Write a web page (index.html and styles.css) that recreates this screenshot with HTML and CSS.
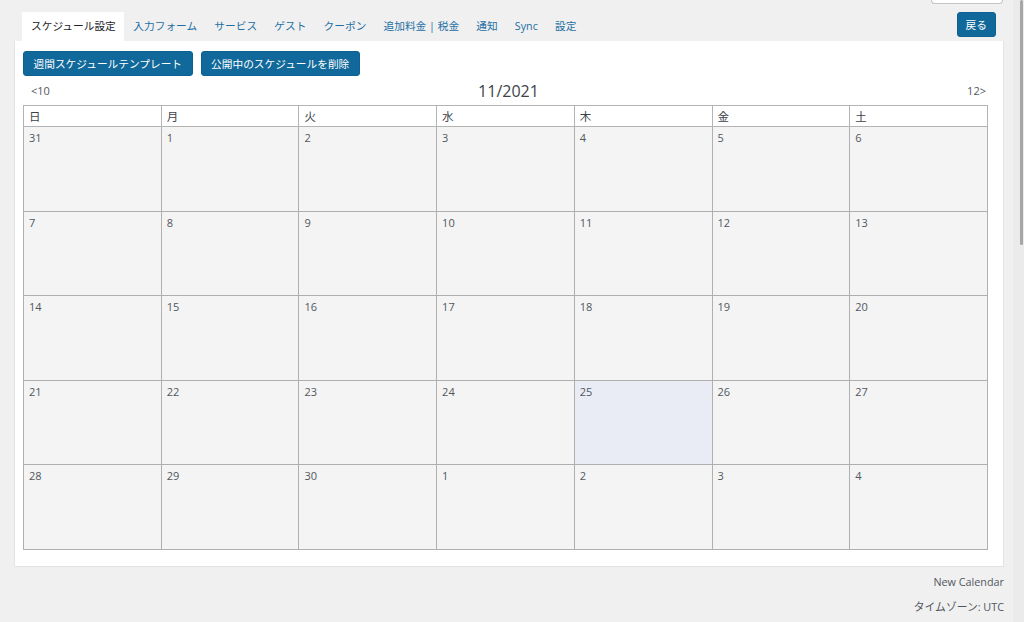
FILE: index.html
```html
<!DOCTYPE html>
<html lang="ja">
<head>
	<meta charset="UTF-8">
	<meta name="viewport" content="width=device-width, initial-scale=1.0">
	<title>スケジュール設定</title>
	<link rel="stylesheet" href="styles.css">
</head>
<body>
	<div class="screen">
		<div class="page">
			<div class="topbar">
				<div class="options-tab"></div>
			</div>

			<div class="tabs-row">
				<ul class="tabs">
					<li class="tab active">スケジュール設定</li>
					<li class="tab">入力フォーム</li>
					<li class="tab">サービス</li>
					<li class="tab">ゲスト</li>
					<li class="tab">クーポン</li>
					<li class="tab">追加料金 | 税金</li>
					<li class="tab">通知</li>
					<li class="tab">Sync</li>
					<li class="tab">設定</li>
				</ul>
				<button class="btn back">戻る</button>
			</div>

			<div class="panel">
				<div class="actions">
					<button class="btn">週間スケジュールテンプレート</button>
					<button class="btn">公開中のスケジュールを削除</button>
				</div>

				<div class="month-nav">
					<span class="prev">&lt;10</span>
					<span class="title">11/2021</span>
					<span class="next">12&gt;</span>
				</div>

				<table class="calendar">
					<thead>
						<tr>
							<th>日</th><th>月</th><th>火</th><th>水</th><th>木</th><th>金</th><th>土</th>
						</tr>
					</thead>
					<tbody>
						<tr>
							<td>31</td><td>1</td><td>2</td><td>3</td><td>4</td><td>5</td><td>6</td>
						</tr>
						<tr>
							<td>7</td><td>8</td><td>9</td><td>10</td><td>11</td><td>12</td><td>13</td>
						</tr>
						<tr>
							<td>14</td><td>15</td><td>16</td><td>17</td><td>18</td><td>19</td><td>20</td>
						</tr>
						<tr>
							<td>21</td><td>22</td><td>23</td><td>24</td><td class="today">25</td><td>26</td><td>27</td>
						</tr>
						<tr>
							<td>28</td><td>29</td><td>30</td><td>1</td><td>2</td><td>3</td><td>4</td>
						</tr>
					</tbody>
				</table>
			</div>

			<div class="footer">
				<p>New Calendar</p>
				<p>タイムゾーン: UTC</p>
			</div>
		</div>
		<div class="scrollbar">
			<div class="thumb"></div>
		</div>
	</div>
</body>
</html>
```

FILE: styles.css
```css
html, body {
	margin: 0;
	padding: 0;
	background: #f0f0f1;
	font-family: "Open Sans", "Noto Sans CJK JP", sans-serif;
	color: #3c434a;
	overflow: hidden;
}

.screen {
	display: flex;
	height: 622px;
}

.page {
	flex: 1;
}

.scrollbar {
	width: 12px;
	background: #ebebec;
}

.scrollbar .thumb {
	width: 3px;
	height: 245px;
	margin-left: 7px;
	background: #a6a6a6;
	border-radius: 2px;
}

.topbar {
	display: flex;
	justify-content: flex-end;
	height: 4px;
	padding-right: 10px;
}

.options-tab {
	width: 70px;
	height: 3px;
	background: #fff;
	border: 1px solid #c3c4c7;
	border-top: none;
	border-radius: 0 0 4px 4px;
}

.tabs-row {
	display: flex;
	justify-content: space-between;
	align-items: flex-start;
	margin: 8px 17px 0 22px;
}

.tabs {
	display: flex;
	list-style: none;
	margin: 0;
	padding: 0;
}

.tab {
	font-size: 10.7px;
	line-height: 29px;
	padding: 0 8.6px;
	color: #1f6fa3;
	white-space: nowrap;
}

.tab.active {
	background: #fff;
	color: #1d2327;
	padding: 0 8px 0 9px;
	margin-right: 1px;
}

.btn {
	font-family: "Open Sans", "Noto Sans CJK JP", sans-serif;
	font-size: 10.7px;
	color: #fff;
	background: #10699a;
	border: 1px solid #0d6291;
	border-radius: 3px;
	height: 25px;
	padding: 0 9.5px;
	cursor: pointer;
}

.btn.back {
	padding: 0 8px;
}

.panel {
	background: #fff;
	border: 1px solid #e3e3e5;
	border-top: none;
	margin: 0 9px 0 14px;
	padding: 10px 15px 16px 8px;
}

.actions {
	display: flex;
	gap: 8px;
}

.month-nav {
	display: flex;
	justify-content: space-between;
	align-items: center;
	height: 29px;
	padding: 0 2px 0 8px;
	color: #50575e;
}

.month-nav .prev,
.month-nav .next {
	font-size: 11px;
}

.month-nav .title {
	font-size: 16px;
	color: #3c434a;
}

.calendar {
	width: 965px;
	table-layout: fixed;
	border-collapse: collapse;
	font-size: 11px;
}

.calendar th {
	background: #fff;
	border: 1px solid #b4b4b4;
	height: 20px;
	padding: 0 5px;
	text-align: left;
	font-weight: normal;
	font-size: 11.5px;
	color: #3c434a;
}

.calendar td {
	background: #f4f4f4;
	border: 1px solid #b0b0b0;
	height: 80.5px;
	padding: 3px 5px 0;
	vertical-align: top;
	color: #50575e;
}

.calendar td.today {
	background: #e9ecf4;
}

.footer {
	margin-right: 9px;
	padding-top: 7px;
	text-align: right;
	font-size: 10.8px;
	color: #50575e;
}

.footer p {
	margin: 0 0 10px;
	line-height: 15px;
}
```
